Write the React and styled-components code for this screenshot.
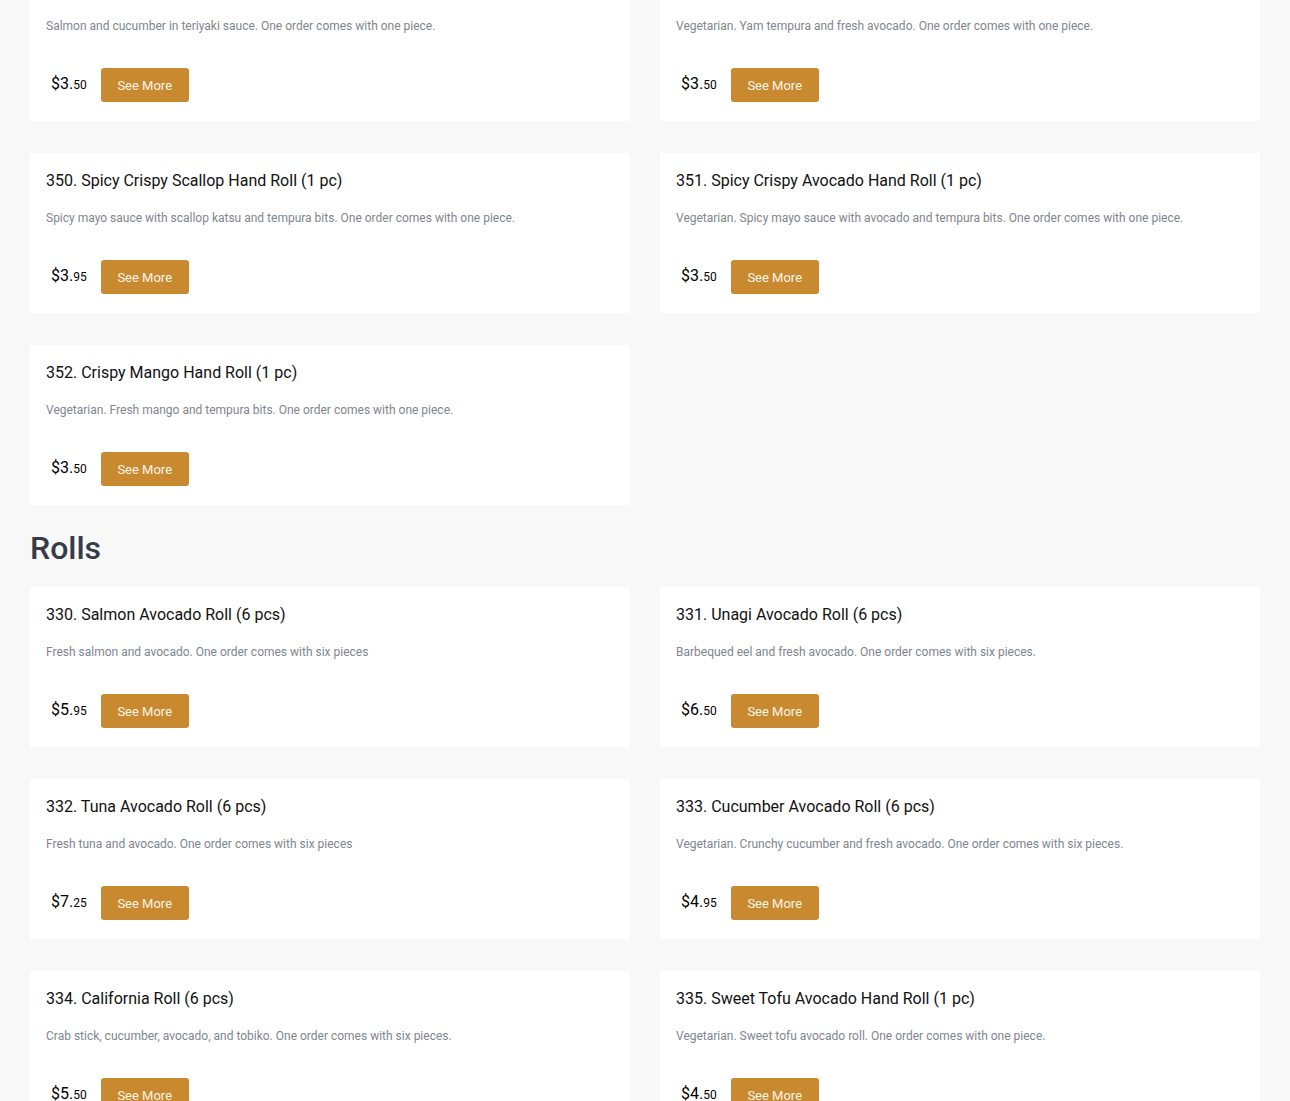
import React from 'react';
import styled, { createGlobalStyle } from 'styled-components';

const GlobalStyle = createGlobalStyle`
  body {
    margin: 0;
    background: #f8f8f8;
    font-family: Roboto, "Liberation Sans", Arial, sans-serif;
  }
`;

const Page = styled.div`
  padding: 0 30px 40px;
  margin-top: -39px;
`;

const Grid = styled.div`
  display: grid;
  grid-template-columns: 1fr 1fr;
  column-gap: 30px;
  row-gap: 32px;
`;

const SectionTitle = styled.h2`
  margin: 23px 0 19px;
  font-size: 32px;
  line-height: 40px;
  font-weight: 500;
  color: #363b47;
`;

const Card = styled.div`
  height: 160px;
  box-sizing: border-box;
  background: #fff;
  padding: 16px 16px 19px;
  display: flex;
  flex-direction: column;
`;

const Title = styled.div`
  font-size: 16px;
  line-height: 24px;
  color: #111;
`;

const Desc = styled.div`
  margin-top: 16px;
  font-size: 12px;
  line-height: 18px;
  color: #80858f;
`;

const Footer = styled.div`
  margin-top: auto;
  display: flex;
  align-items: center;
  gap: 14px;
  padding-left: 5px;
`;

const Price = styled.span`
  font-size: 16px;
  line-height: 16px;
  margin-top: -2px;
  color: #000;
  small {
    font-size: 12px;
  }
`;

const Button = styled.button`
  height: 34px;
  width: 88px;
  border: none;
  border-radius: 3px;
  background: #c8892f;
  color: #fdf6ea;
  font-family: inherit;
  font-size: 13px;
  cursor: pointer;
`;

const handRolls = [
  { title: '348. Salmon Teriyaki Hand Roll (1 pc)', desc: 'Salmon and cucumber in teriyaki sauce. One order comes with one piece.', price: '3.50' },
  { title: '349. Yam Tempura Avocado Hand Roll (1 pc)', desc: 'Vegetarian. Yam tempura and fresh avocado. One order comes with one piece.', price: '3.50' },
  { title: '350. Spicy Crispy Scallop Hand Roll (1 pc)', desc: 'Spicy mayo sauce with scallop katsu and tempura bits. One order comes with one piece.', price: '3.95' },
  { title: '351. Spicy Crispy Avocado Hand Roll (1 pc)', desc: 'Vegetarian. Spicy mayo sauce with avocado and tempura bits. One order comes with one piece.', price: '3.50' },
  { title: '352. Crispy Mango Hand Roll (1 pc)', desc: 'Vegetarian. Fresh mango and tempura bits. One order comes with one piece.', price: '3.50' },
];

const rolls = [
  { title: '330. Salmon Avocado Roll (6 pcs)', desc: 'Fresh salmon and avocado. One order comes with six pieces', price: '5.95' },
  { title: '331. Unagi Avocado Roll (6 pcs)', desc: 'Barbequed eel and fresh avocado. One order comes with six pieces.', price: '6.50' },
  { title: '332. Tuna Avocado Roll (6 pcs)', desc: 'Fresh tuna and avocado. One order comes with six pieces', price: '7.25' },
  { title: '333. Cucumber Avocado Roll (6 pcs)', desc: 'Vegetarian. Crunchy cucumber and fresh avocado. One order comes with six pieces.', price: '4.95' },
  { title: '334. California Roll (6 pcs)', desc: 'Crab stick, cucumber, avocado, and tobiko. One order comes with six pieces.', price: '5.50' },
  { title: '335. Sweet Tofu Avocado Hand Roll (1 pc)', desc: 'Vegetarian. Sweet tofu avocado roll. One order comes with one piece.', price: '4.50' },
];

function Item({ title, desc, price }) {
  const [dollars, cents] = price.split('.');
  return (
    <Card>
      <Title>{title}</Title>
      <Desc>{desc}</Desc>
      <Footer>
        <Price>${dollars}.<small>{cents}</small></Price>
        <Button>See More</Button>
      </Footer>
    </Card>
  );
}

export default function App() {
  return (
    <Page>
      <GlobalStyle />
      <Grid>
        {handRolls.map(i => <Item key={i.title} {...i} />)}
      </Grid>
      <SectionTitle>Rolls</SectionTitle>
      <Grid>
        {rolls.map(i => <Item key={i.title} {...i} />)}
      </Grid>
    </Page>
  );
}
